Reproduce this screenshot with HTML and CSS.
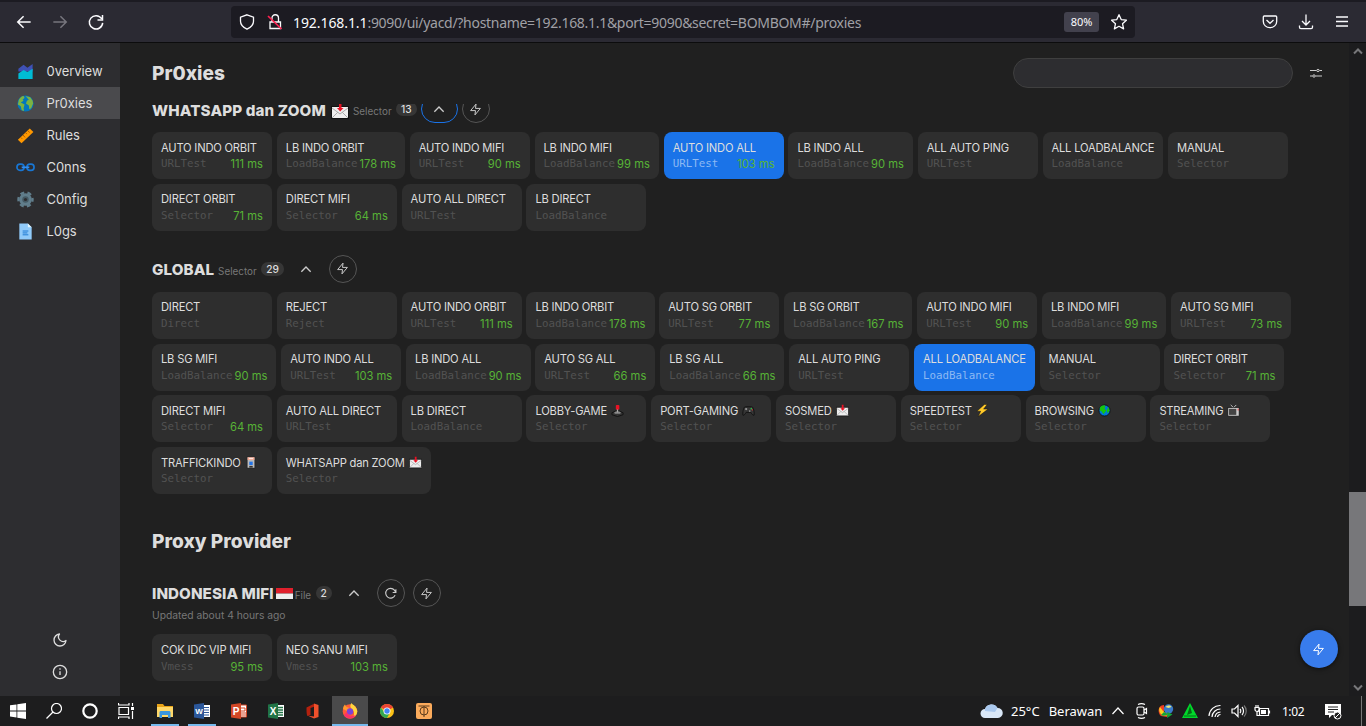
FILE: index.html
```html
<!DOCTYPE html>
<html lang="id">
<head>
<meta charset="utf-8">
<title>yacd</title>
<link rel="stylesheet" href="styles.css">
</head>
<body>
<svg class="defs" aria-hidden="true">
  <symbol id="bolt" viewBox="0 0 24 24"><path d="M13 2 3 14h9l-1 8 10-12h-9z" fill="none" stroke="currentColor" stroke-width="1.800" stroke-linejoin="round"/></symbol>
  <symbol id="up" viewBox="0 0 24 24"><path d="m5 16 7-7 7 7" fill="none" stroke="currentColor" stroke-width="2"/></symbol>
  <symbol id="mail" viewBox="0 0 18 16"><rect x=".5" y="3.500" width="17" height="12" fill="#eee" stroke="#111"/><path d="m1 15 6-6m10 6-6-6M1 5l8 6 8-6" fill="none" stroke="#aaa"/><path d="M8 0h2.500v5h2L9.200 8.500 6 5h2z" fill="#e81224"/></symbol>
  <symbol id="joystick" viewBox="0 0 14 14"><path d="M1 9.500 7 6.500l6 3v2l-6 2-6-2z" fill="#333" stroke="#111"/><ellipse cx="7" cy="9.300" rx="3.500" ry="1.300" fill="#888"/><path d="M7 5v4" stroke="#aaa" stroke-width="1.500"/><rect x="5.200" y="1" width="3.800" height="5" rx="1" fill="#e81224"/></symbol>
  <symbol id="pad" viewBox="0 0 14 14"><path d="M3.500 3h7c2 0 3 7 2.500 9-1 1-3-2-3.500-3h-5c-.5 1-2.500 4-3.500 3C.500 10 1.500 3 3.500 3z" fill="#363636" stroke="#111"/><circle cx="4.500" cy="5.500" r="1.200" fill="#999"/><circle cx="8.300" cy="7.500" r=".9" fill="#999"/><circle cx="10" cy="5" r=".9" fill="#35b34a"/><circle cx="11.200" cy="6.300" r=".7" fill="#e33"/></symbol>
  <symbol id="zap" viewBox="0 0 14 14"><path d="M9 .5 1 7.800h4L2.500 13.500 13 5.500H8.200L12 .5z" fill="#ffc928" stroke="#111" stroke-width=".5"/></symbol>
  <symbol id="globe" viewBox="0 0 14 14"><circle cx="7" cy="7" r="6" fill="#0078d7" stroke="#111"/><path d="M2 4c2-3 5-3 6-2L7 5l2 2-3 4-2-3-2-1zM11 3l1.500 4-2 3-1-3z" fill="#16c60c"/></symbol>
  <symbol id="tv" viewBox="0 0 14 14"><path d="m4 1 3 3 3-3" fill="none" stroke="#ccc"/><rect x="1" y="4" width="12" height="9" fill="#ccc" stroke="#111" stroke-width=".6"/><rect x="2.200" y="5.200" width="7.800" height="6.500" fill="#444"/><path d="M12 5v2" stroke="#e33"/></symbol>
  <symbol id="light" viewBox="0 0 14 14"><rect x="2.500" y=".5" width="9" height="13" fill="#bbb" stroke="#111" stroke-width=".6"/><rect x="3" y="1" width="8" height="3" fill="#f6a58d"/><path d="M4.500 2.500h5" stroke="#fff"/><rect x="5" y="6" width="4" height="4" fill="#2374e8"/><rect x="5" y="11" width="4" height="2" fill="#333"/></symbol>
</svg>

<header class="topbar">
  <svg class="nav-ic" viewBox="0 0 24 24"><path d="M20 12H4.500m7-7-7 7 7 7"/></svg>
  <svg class="nav-ic dim" viewBox="0 0 24 24"><path d="M4 12h15.500M12.500 5l7 7-7 7"/></svg>
  <svg class="nav-ic" viewBox="0 0 24 24"><path d="M18.700 8A8 8 0 1 0 20 13M19.800 3.500v6h-6"/></svg>
  <div class="urlbar">
    <svg class="url-ic" viewBox="0 0 16 16"><path d="M8 .800 14.500 3.200v4c0 3.500-2.700 6.200-6.500 8-3.800-1.800-6.500-4.500-6.500-8v-4z"/></svg>
    <svg class="url-ic lock" viewBox="0 0 16 16"><path d="M3 8h10.500v6.500H3zM5 8V4a3.200 3.200 0 0 1 6.500 0v4"/><path class="slash" d="m1 2 13.500 13"/></svg>
    <div class="url"><b>192.168.1.1</b>:9090/ui/yacd/?hostname=192.168.1.1&amp;port=9090&amp;secret=BOMBOM#/proxies</div>
    <span class="zoom">80%</span>
    <svg class="star" viewBox="0 0 16 16"><path d="m8 .700 2.200 4.900 5.200.6-3.900 3.500 1.100 5.200L8 12.300l-4.600 2.600 1.100-5.200L.600 6.200l5.200-.6z"/></svg>
  </div>
  <div class="tools">
    <svg viewBox="0 0 16 16"><path d="M2.300 2h11.400c.6 0 1 .4 1 1v4.500a6.700 6.200 0 0 1-13.400 0V3c0-.6.400-1 1-1z"/><path d="M4.500 6 8 9.300 11.500 6"/></svg>
    <svg viewBox="0 0 16 16"><path d="M8 .500v10M4 7l4 4 4-4M1.500 11.500v1.700c0 .8.600 1.400 1.400 1.400h10.200c.8 0 1.400-.6 1.400-1.400v-1.700"/></svg>
    <svg viewBox="0 0 16 16"><path d="M2 3h12M2 7.500h12M2 12h12"/></svg>
  </div>
</header>

<div class="app">
  <aside class="side">
    <nav>
      <a><svg viewBox="0 0 20 20"><path d="M2.500 7 8 3l4 3 5.500-4v8h-15z" fill="#3f51b5"/><path d="M2.500 12 8 8.500l4 2L17.500 7v11h-15z" fill="#00bcd4"/></svg>0verview</a>
      <a class="on"><svg viewBox="0 0 20 20"><circle cx="10" cy="10" r="8.500" fill="#0277bd"/><path d="M3 6c1-2 3-4 5-4l1 2-2 2 1 1-3 2 4 2-1 4 .500 3-2.500-1-1-4-3-2zM10 2l5 1.500L17.500 7l.5 3-2 5-2 1-.5-4-3-2 1-3 2-1z" fill="#7cb342"/></svg>Pr0xies</a>
      <a><svg viewBox="0 0 20 20"><path d="m2 14.500 12.500-12 3.800 3.700-12.500 12z" fill="#ff9800"/><path d="m5 12 1.500 1.500M7.500 9.500 9.500 12M10 7l1.500 1.500M12.500 5l2 2" stroke="#a95b00"/></svg>Rules</a>
      <a><svg viewBox="0 0 20 20"><rect x="1" y="6.500" width="7.500" height="6.500" rx="3.200" fill="none" stroke="#1976d2" stroke-width="1.800"/><rect x="11.500" y="6.500" width="7.500" height="6.500" rx="3.200" fill="none" stroke="#1976d2" stroke-width="1.800"/><path d="M6 9.800h8" stroke="#2f8df0" stroke-width="1.800"/></svg>C0nns</a>
      <a><svg viewBox="0 0 20 20"><circle cx="10" cy="10" r="7.400" fill="none" stroke="#607d8b" stroke-width="2.500" stroke-dasharray="4.300 3.450" stroke-dashoffset="2"/><circle cx="10" cy="10" r="6.600" fill="#607d8b"/><circle cx="10" cy="10" r="3.400" fill="#455a64"/><circle cx="10" cy="10" r="1.700" fill="#2d2d30"/></svg>C0nfig</a>
      <a><svg viewBox="0 0 20 20"><path d="M3.500 1.500h9l4 4v13h-13z" fill="#90caf9"/><path d="M12.500 1.500v4h4z" fill="#e1f5fe"/><path d="M7 9.500h6M7 11.500h5M7 13.500h6" stroke="#1976d2"/></svg>L0gs</a>
    </nav>
    <div class="side-foot">
      <svg viewBox="0 0 24 24"><path d="M21 12.800A9 9 0 1 1 11.200 3 7 7 0 0 0 21 12.800z"/></svg>
      <svg viewBox="0 0 24 24"><circle cx="12" cy="12" r="10"/><path d="M12 16.500V11M12 8.500V6.500"/></svg>
    </div>
  </aside>

  <main class="main">
    <div class="page-head">
      <h1>Pr0xies</h1>
      <div class="search"></div>
      <svg class="filters" viewBox="0 0 12 12"><path d="M0 3.500h6.500M9.500 3.500H12M0 9h2.500M5.500 9H12"/><circle cx="8" cy="3.500" r="1.200"/><circle cx="4" cy="9" r="1.200"/></svg>
    </div>
    <div class="scroll">
      <section class="group g1">
        <div class="ghead"><h2>WHATSAPP dan ZOOM <svg class="em2"><use href="#mail"/></svg></h2><span class="gtype">Selector</span><span class="badge">13</span><span class="pill focus"><svg><use href="#up"/></svg></span><span class="circ"><svg><use href="#bolt"/></svg></span></div>
        <div class="cards">
          <div class="card"><p>AUTO INDO ORBIT</p><div><i>URLTest</i><em>111 ms</em></div></div>
          <div class="card"><p>LB INDO ORBIT</p><div><i>LoadBalance</i><em>178 ms</em></div></div>
          <div class="card"><p>AUTO INDO MIFI</p><div><i>URLTest</i><em>90 ms</em></div></div>
          <div class="card"><p>LB INDO MIFI</p><div><i>LoadBalance</i><em>99 ms</em></div></div>
          <div class="card sel"><p>AUTO INDO ALL</p><div><i>URLTest</i><em>103 ms</em></div></div>
          <div class="card"><p>LB INDO ALL</p><div><i>LoadBalance</i><em>90 ms</em></div></div>
          <div class="card"><p>ALL AUTO PING</p><div><i>URLTest</i></div></div>
          <div class="card"><p>ALL LOADBALANCE</p><div><i>LoadBalance</i></div></div>
          <div class="card"><p>MANUAL</p><div><i>Selector</i></div></div>
          <div class="card"><p>DIRECT ORBIT</p><div><i>Selector</i><em>71 ms</em></div></div>
          <div class="card"><p>DIRECT MIFI</p><div><i>Selector</i><em>64 ms</em></div></div>
          <div class="card"><p>AUTO ALL DIRECT</p><div><i>URLTest</i></div></div>
          <div class="card"><p>LB DIRECT</p><div><i>LoadBalance</i></div></div>
        </div>
      </section>
      <section class="group g2">
        <div class="ghead"><h2>GLOBAL</h2><span class="gtype">Selector</span><span class="badge">29</span><span class="pill"><svg><use href="#up"/></svg></span><span class="circ"><svg><use href="#bolt"/></svg></span></div>
        <div class="cards">
          <div class="card"><p>DIRECT</p><div><i>Direct</i></div></div>
          <div class="card"><p>REJECT</p><div><i>Reject</i></div></div>
          <div class="card"><p>AUTO INDO ORBIT</p><div><i>URLTest</i><em>111 ms</em></div></div>
          <div class="card"><p>LB INDO ORBIT</p><div><i>LoadBalance</i><em>178 ms</em></div></div>
          <div class="card"><p>AUTO SG ORBIT</p><div><i>URLTest</i><em>77 ms</em></div></div>
          <div class="card"><p>LB SG ORBIT</p><div><i>LoadBalance</i><em>167 ms</em></div></div>
          <div class="card"><p>AUTO INDO MIFI</p><div><i>URLTest</i><em>90 ms</em></div></div>
          <div class="card"><p>LB INDO MIFI</p><div><i>LoadBalance</i><em>99 ms</em></div></div>
          <div class="card"><p>AUTO SG MIFI</p><div><i>URLTest</i><em>73 ms</em></div></div>
          <div class="card"><p>LB SG MIFI</p><div><i>LoadBalance</i><em>90 ms</em></div></div>
          <div class="card"><p>AUTO INDO ALL</p><div><i>URLTest</i><em>103 ms</em></div></div>
          <div class="card"><p>LB INDO ALL</p><div><i>LoadBalance</i><em>90 ms</em></div></div>
          <div class="card"><p>AUTO SG ALL</p><div><i>URLTest</i><em>66 ms</em></div></div>
          <div class="card"><p>LB SG ALL</p><div><i>LoadBalance</i><em>66 ms</em></div></div>
          <div class="card"><p>ALL AUTO PING</p><div><i>URLTest</i></div></div>
          <div class="card sel"><p>ALL LOADBALANCE</p><div><i>LoadBalance</i></div></div>
          <div class="card"><p>MANUAL</p><div><i>Selector</i></div></div>
          <div class="card"><p>DIRECT ORBIT</p><div><i>Selector</i><em>71 ms</em></div></div>
          <div class="card"><p>DIRECT MIFI</p><div><i>Selector</i><em>64 ms</em></div></div>
          <div class="card"><p>AUTO ALL DIRECT</p><div><i>URLTest</i></div></div>
          <div class="card"><p>LB DIRECT</p><div><i>LoadBalance</i></div></div>
          <div class="card"><p>LOBBY-GAME <svg class="em"><use href="#joystick"/></svg></p><div><i>Selector</i></div></div>
          <div class="card"><p>PORT-GAMING <svg class="em"><use href="#pad"/></svg></p><div><i>Selector</i></div></div>
          <div class="card"><p>SOSMED <svg class="em"><use href="#mail"/></svg></p><div><i>Selector</i></div></div>
          <div class="card"><p>SPEEDTEST <svg class="em"><use href="#zap"/></svg></p><div><i>Selector</i></div></div>
          <div class="card"><p>BROWSING <svg class="em"><use href="#globe"/></svg></p><div><i>Selector</i></div></div>
          <div class="card"><p>STREAMING <svg class="em"><use href="#tv"/></svg></p><div><i>Selector</i></div></div>
          <div class="card"><p>TRAFFICKINDO <svg class="em narrow"><use href="#light"/></svg></p><div><i>Selector</i></div></div>
          <div class="card"><p>WHATSAPP dan ZOOM <svg class="em"><use href="#mail"/></svg></p><div><i>Selector</i></div></div>
        </div>
      </section>
      <h1 class="provider">Proxy Provider</h1>
      <section class="group g3">
        <div class="ghead"><h2>INDONESIA MIFI<svg class="flag" viewBox="0 0 17 11"><path d="M0 0h17v5.500H0z" fill="#e0202c"/><path d="M0 5.500h17V11H0z" fill="#eee"/></svg></h2><span class="gtype">File</span><span class="badge">2</span><span class="pill"><svg><use href="#up"/></svg></span><span class="circ"><svg viewBox="0 0 24 24"><path d="M22 4v6h-6M20.500 15a9 9 0 1 1-1.300-9.200L22 10" fill="none" stroke="currentColor" stroke-width="2"/></svg></span><span class="circ"><svg><use href="#bolt"/></svg></span></div>
        <div class="updated">Updated about 4 hours ago</div>
        <div class="cards">
          <div class="card"><p>COK IDC VIP MIFI</p><div><i>Vmess</i><em>95 ms</em></div></div>
          <div class="card"><p>NEO SANU MIFI</p><div><i>Vmess</i><em>103 ms</em></div></div>
        </div>
      </section>
    </div>
    <div class="fab"><svg><use href="#bolt"/></svg></div>
  </main>
  <div class="bar">
    <svg viewBox="0 0 10 8"><path d="m1 6.500 4-4 4 4"/></svg>
    <div class="thumb"></div>
    <svg viewBox="0 0 10 8"><path d="m1 1.500 4 4 4-4"/></svg>
  </div>
</div>

<footer class="taskbar">
  <div class="launch">
    <span><svg viewBox="0 0 16 16"><path d="M0 2.300 6.500 1.400v6.100H0zM7.300 1.300 16 0v7.500H7.300zM0 8.400h6.500v6.100L0 13.600zM7.300 8.400H16V16l-8.700-1.300z" fill="#fff"/></svg></span>
    <span><svg viewBox="0 0 16 16" class="ln"><circle cx="10.500" cy="5.500" r="5"/><path d="M7 9 .500 15.500"/></svg></span>
    <span><svg viewBox="0 0 16 16" class="ln"><circle cx="8" cy="8" r="6.700" stroke-width="2.200"/></svg></span>
    <span><svg viewBox="0 0 16 16" class="ln"><path d="M1 4.500h9.500v7H1zM.5 0v2H11V0M.5 16v-2H11v2M14.500 0v3M14.500 8v8"/><path d="M13 4h3v3h-3z" fill="#fff" stroke="none"/></svg></span>
  </div>
  <div class="apps">
    <span class="run"><svg viewBox="0 0 16 16"><path d="M0 1h6l1.500 2H16v11H0z" fill="#e8a317"/><path d="M0 4h16v10H0z" fill="#ffd869"/><path d="M2.500 15V9.500c0-1 .5-1.500 1.500-1.500h8c1 0 1.500.5 1.500 1.500V15H11v-3H5v3z" fill="#3a96dd"/></svg></span>
    <span class="run"><svg viewBox="0 0 16 16"><path d="M8 2h8v12H8z" fill="#fff"/><path d="M10 4.500h5M10 7h5M10 9.500h5M10 12h5" stroke="#2b579a"/><path d="m0 1.500 10-1.500v16L0 14.500z" fill="#2b579a"/><text x="5" y="11.300">W</text></svg></span>
    <span><svg viewBox="0 0 16 16"><path d="M8 2h7.500v12H8z" fill="#fff" stroke="#d24726"/><path d="M10 5h4v3h-4M10 10h5M10 12h5" stroke="#d24726" fill="none"/><path d="m0 1.500 10-1.500v16L0 14.500z" fill="#d24726"/><text class="big" x="5" y="11.800">P</text></svg></span>
    <span><svg viewBox="0 0 16 16"><path d="M8 2h8v12H8z" fill="#fff"/><path d="M10 4.500h5M10 7h5M10 9.500h5M10 12h5" stroke="#217346" stroke-width="1.300"/><path d="m0 1.500 10-1.500v16L0 14.500z" fill="#217346"/><text class="big" x="5" y="11.800">X</text></svg></span>
    <span><svg viewBox="0 0 16 16"><path d="M1.500 4.500 9 .8v3L5.500 5v7L2.500 13c-1-1-1-6-1-8.500z" fill="#b5210e"/><path d="m9 .5 4.500 1.500v12L9 15.500l-6-2.700 6 .6z" fill="#f0502c"/></svg></span>
    <span class="active"><svg viewBox="0 0 16 16"><circle cx="8" cy="8.500" r="7.300" fill="#ff5a36"/><path d="M9.500 0c1 2 5.500 3 5.800 8.500-.3 3-2 5-4 5.500 2-4 0-7-2-8.500C8 4 8 2 9.500 0z" fill="#ffd53d"/><path d="M1 6C1 3 3 1.500 3 1.500L4.500 4 8 5 5 8z" fill="#ff9a2e"/><circle cx="8" cy="8.500" r="3.200" fill="#7b43d8"/><path d="M2 12c2 4 9 5 12 0-4 2-8 1-9-3z" fill="#fb2f6b"/></svg></span>
    <span><svg viewBox="0 0 16 16"><circle cx="8" cy="8" r="7" fill="#fbc116"/><path d="M8 8 1.900 4.500A7 7 0 0 1 14.100 4.500z" fill="#ea4335"/><path d="M1.900 4.500A7 7 0 0 0 8 15l3-5.500H5.500z" fill="#34a853"/><circle cx="8" cy="8" r="3.500" fill="#fff"/><circle cx="8" cy="8" r="2.700" fill="#4285f4"/></svg></span>
    <span><svg viewBox="0 0 16 16"><rect width="16" height="16" rx="2" fill="#fbab5c"/><g fill="none" stroke="#5d3d1c"><path d="M2.500 3h11M8 3v11"/><circle cx="8" cy="8" r="4"/></g></svg></span>
  </div>
  <div class="tray">
    <span class="w32"><svg width="23" height="16" viewBox="0 0 23 16"><path d="M5 15a4.500 4.500 0 0 1 0-9A7 7 0 0 1 17.500 5 5 5 0 0 1 18 15z" fill="#d9e7f7"/><path d="M5 6A7 7 0 0 1 17.500 5L15 9 5 8z" fill="#a9c8ee"/></svg></span>
    <span class="weather"><b>25°C</b><b>Berawan</b></span>
    <span class="w24"><svg width="14" height="14" viewBox="0 0 14 14" class="ln"><path d="m1.500 10 5.500-6 5.500 6"/></svg></span>
    <span class="w24"><svg width="14" height="16" viewBox="0 0 14 16" class="ln"><rect x="2" y="4" width="7" height="8" rx="1.500"/><path d="m9 7 2.500-1.500v5L9 9M3 1.500C5 .5 8 .5 10 1.500M3 14.500c2 1 5 1 7 0"/></svg></span>
    <span class="w23"><svg width="16" height="14" viewBox="0 0 16 14"><path d="M6 1C0 1-1 9 3 12l6 1 2-3-5-2z" fill="#ef3d22"/><path d="M2 3c-2 3 0 8 4 9l4-1-5-4z" fill="#f8d21c"/><path d="M3 11c2 1 5 1 7-1L6 8z" fill="#13a538"/><circle cx="10.500" cy="5" r="4.700" fill="#3979c8"/><path d="M7.500 3c2-2 5-2 6 0l-3 1z" fill="#e8e87a"/><path d="m9 14 .5-6 5 2.500z" fill="#13a538"/></svg></span>
    <span class="w25"><svg width="16" height="16" viewBox="0 0 16 16"><path d="M8 0 16 15H0z" fill="#00d92b"/><path d="m8 3 2 7-5 2z" fill="#036b14"/><path d="M2 13h12" stroke="#056f18"/></svg></span>
    <span class="w25"><svg width="14" height="14" viewBox="0 0 14 14" class="ln"><path d="M1 12A11 11 0 0 1 12.500 1.500M4 13a8.500 8.500 0 0 1 8.500-8M7 13a6 6 0 0 1 5.500-5M9.500 13a3 3 0 0 1 3-2.500"/></svg></span>
    <span class="w23"><svg width="16" height="14" viewBox="0 0 16 14" class="ln"><path d="M1 5h2.500L7 1.500v11L3.500 9H1zM9 5c1 1 1 3 0 4M11 3c2 2 2 6 0 8"/><path d="M13 1.500c3 3 3 8 0 11" stroke="#777"/></svg></span>
    <span class="w25"><svg width="17" height="14" viewBox="0 0 17 14" class="ln"><path d="M5.500 4.500h9v7h-9zM15.500 6.500v3M1 3.500h4v2c0 1-1 2-2 2s-2-1-2-2zM2 1v2M4 1v2M3 8v3.500h2.500"/><path d="M7 6h5v4H7z" fill="#fff" stroke="none"/></svg></span>
    <span class="time">1:02</span>
    <span class="w40"><svg width="17" height="17" viewBox="0 0 17 17"><path d="M0 1h16v11H7l-3 3v-3H0z" fill="#fff"/><path d="M3 4h10M3 6.500h10M3 9h6" stroke="#222"/><circle cx="12.500" cy="12.500" r="3.500" fill="#222" stroke="#fff"/><path d="m10 15 5-5" stroke="#fff"/></svg></span>
    <span class="edge"></span>
  </div>
</footer>
</body>
</html>
```
FILE: styles.css
```css
* { box-sizing: border-box; }
body { margin: 0; width: 1366px; height: 726px; overflow: hidden; display: flex; flex-direction: column; background: #202020; color: #ddd; font-family: Inter, "Liberation Sans", sans-serif; }
svg { display: block; flex: none; }
h1, h2, p { margin: 0; }
.defs { position: absolute; width: 0; height: 0; }

.topbar { flex: none; height: 43px; border-top: 2px solid #1c1b22; border-bottom: 1px solid #0c0c0d; background: #2b2a33; display: flex; align-items: center; padding-left: 14px; }
.topbar svg { fill: none; stroke: #fbfbfe; }
.nav-ic { width: 20px; height: 20px; margin-right: 16px; stroke-width: 1.800; }
.topbar .dim { stroke: #77767e; }
.urlbar { margin-left: 109px; width: 904px; height: 32px; border-radius: 4px; background: #1c1b22; display: flex; align-items: center; padding-left: 8px; }
.url-ic { width: 16px; height: 16px; stroke-width: 1.300; }
.lock { margin-left: 12px; }
.slash { stroke: #ff2050; stroke-width: 1.700; }
.url { margin-left: 10px; width: 771px; font: 14px "Noto Sans", sans-serif; letter-spacing: -.295px; color: #a0a0a6; white-space: nowrap; }
.url b { font-weight: 400; letter-spacing: -.08px; color: #fbfbfe; }
.zoom { width: 35px; height: 20px; border-radius: 3px; background: #42414d; font: 11px/20px "Noto Sans", sans-serif; color: #fbfbfe; text-align: center; }
.star { width: 16px; height: 16px; margin-left: 12px; stroke-width: 1.300; stroke-linejoin: round; }
.tools { display: flex; gap: 20px; margin-left: 127px; }
.tools svg { width: 16px; height: 16px; stroke-width: 1.300; }

.app { flex: none; height: 653px; display: flex; }
.side { width: 120px; background: #2d2d30; display: flex; flex-direction: column; justify-content: space-between; padding-top: 12px; }
.side a { display: flex; align-items: center; height: 32px; padding-left: 16px; gap: 11.500px; font-size: 13px; line-height: 32px; letter-spacing: -.05px; color: #ddd; }
.side a svg { width: 19px; height: 19px; }
.side .on { background: #4a4a4d; }
.side-foot { display: flex; flex-direction: column; align-items: center; gap: 16px; padding-bottom: 16px; }
.side-foot svg { width: 16px; height: 16px; fill: none; stroke: #ddd; stroke-width: 2; stroke-linejoin: round; }

.main { position: relative; width: 1229px; display: flex; flex-direction: column; }
.page-head { flex: none; height: 61px; display: flex; align-items: center; padding: 0 0 2px 32px; }
h1 { font-size: 19.100px; line-height: 24px; font-weight: 800; color: #ddd; }
.page-head h1 { width: 861px; }
.search { width: 280px; height: 30px; border: 1px solid #3f3f3f; border-radius: 15px; background: #2d2d30; }
.filters { width: 12px; height: 12px; margin-left: 17px; fill: none; stroke: #ccc; }
.scroll { flex: 1; min-height: 0; overflow: hidden; padding-left: 32px; }
.ghead { display: flex; align-items: center; height: 28px; margin-bottom: 9px; }
.g1 { margin-top: -9px; }
.g2 { margin-top: 24.200px; }
h2 { display: flex; align-items: center; gap: 5px; margin-top: 2px; font-size: 15.200px; line-height: 12px; font-weight: 800; letter-spacing: .06px; color: #ddd; white-space: nowrap; }
.g1 h2 { margin-top: 3px; letter-spacing: .13px; }
.em2 { width: 18px; height: 16px; margin: -2px 0; }
.gtype { margin: 4px 4.500px 0 4px; font-size: 9.900px; line-height: 14px; color: #777; }
.badge { height: 14px; padding: 0 5px; border-radius: 7px; background: #363636; color: #ddd; font-size: 10.200px; line-height: 14px; font-weight: 500; }
.pill { width: 37px; height: 28px; margin-left: 4px; border: 1px solid transparent; border-radius: 14px; display: flex; align-items: center; justify-content: center; color: #ccc; }
.pill svg { width: 16px; height: 16px; }
.focus { border-color: #1a73e8; }
.circ { width: 28px; height: 28px; margin-left: 4px; border: 1px solid #555; border-radius: 50%; display: flex; align-items: center; justify-content: center; color: #ccc; }
.circ svg { width: 13px; height: 13px; }
.cards { display: flex; flex-wrap: wrap; gap: 4.700px 4.800px; padding-right: 50px; }
.card { min-width: 120px; height: 47px; padding: 8.600px 9px 0; border-radius: 8px; background: #2e2e2e; white-space: nowrap; }
.card p { display: flex; align-items: center; gap: 4px; height: 14px; font-size: 11.200px; line-height: 14px; letter-spacing: -.21px; color: #ddd; }
.em { width: 13px; height: 13px; }
.narrow { width: 12px; }
.card div { display: flex; justify-content: space-between; gap: 2px; height: 14px; margin-top: 2.600px; line-height: 14px; }
.card i { font: 10.820px/14px "DejaVu Sans Mono", monospace; color: #525252; }
.card em { font-style: normal; font-size: 11.200px; color: #57b336; }
.card.sel { background: #1a73e8; }
.sel i { color: #8db9f3; }
.provider { margin-top: 35px; }
.g3 { margin-top: 26.500px; }
.g3 .ghead { margin-bottom: 1px; }
.flag { width: 17px; height: 11px; }
.g3 h2 { gap: 2px; margin-top: 1px; }
.g3 .gtype { margin-left: 2px; }
.g3 .circ + .circ { margin-left: 8px; }
.updated { font-size: 10.300px; line-height: 14px; margin-bottom: 12px; color: #777; }
.fab { position: absolute; right: 11px; bottom: 28px; width: 38px; height: 38px; border-radius: 50%; background: #387cec; box-shadow: 0 1px 5px rgba(0,0,0,.6); display: flex; align-items: center; justify-content: center; color: #fff; }
.fab svg { width: 13px; height: 13px; margin-right: 1px; }
.bar { width: 17px; background: #1c1c1e; display: flex; flex-direction: column; align-items: center; padding: 4px 0; }
.bar svg { width: 10px; height: 8px; fill: none; stroke: #77777a; stroke-width: 2; }
.thumb { width: 17px; height: 114px; margin: 437px 0 78px; background: #77777a; }

.taskbar { flex: none; height: 30px; background: #1d1d1e; display: flex; color: #fff; }
.taskbar span { display: flex; flex: none; align-items: center; justify-content: center; height: 30px; }
.ln { fill: none; stroke: #fff; stroke-width: 1.200; }
.launch, .apps, .tray { display: flex; }
.launch span { width: 36px; }
.launch svg, .apps svg { width: 16px; height: 16px; }
.apps { margin-left: 2px; }
.apps span { width: 37px; position: relative; }
.apps text { font: bold 8px "Liberation Sans", sans-serif; fill: #fff; text-anchor: middle; }
.apps .big { font-size: 10px; }
.apps .active { width: 36px; margin: 0 0 0 1px; background: #4a4a4b; border-bottom: 2px solid #76b9ed; padding-top: 2px; }
.run::after { content: ""; position: absolute; bottom: 0; left: 5px; width: 28px; height: 2px; background: #76b9ed; }
.tray { margin-left: auto; }
.taskbar .weather { width: 99px; padding-left: 4px; gap: 9px; justify-content: flex-start; font: 13px "Noto Sans", sans-serif; white-space: nowrap; }
.weather b { font-weight: 400; }
.taskbar .time { width: 38px; padding-right: 2px; font: 12px "Noto Sans", sans-serif; letter-spacing: -.4px; }
.w23 { width: 23px; }
.w24 { width: 24px; }
.w25 { width: 25px; }
.w32 { width: 32px; }
.w40 { width: 40px; }
.edge { width: 5px; margin-left: 8px; border-left: 1px solid #777; }
```
